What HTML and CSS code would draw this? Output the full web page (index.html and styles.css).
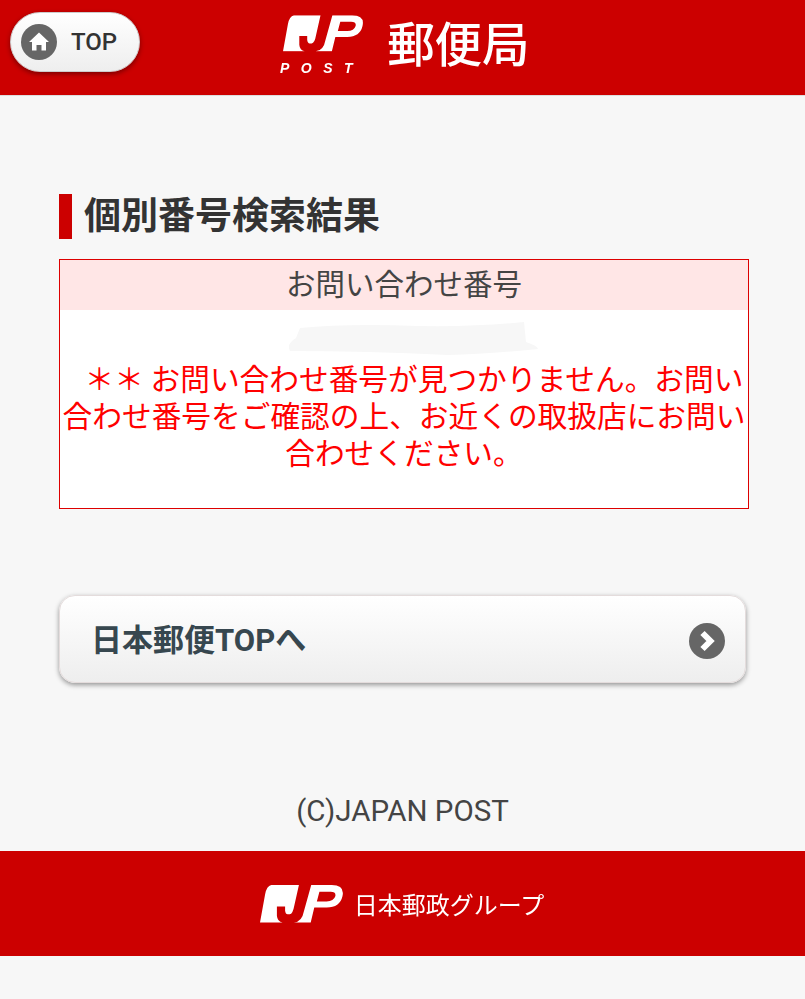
FILE: index.html
```html
<!DOCTYPE html>
<html lang="ja">
<head>
<meta charset="utf-8">
<title>個別番号検索結果</title>
<link rel="stylesheet" href="styles.css">
</head>
<body>
<svg class="defs" width="0" height="0" aria-hidden="true">
  <symbol id="jp-logo" viewBox="0 0 82 37" preserveAspectRatio="none">
    <path fill="#fff" d="M0 36.500 L5 9 Q6.500 1 11 0 L38 0 L33.500 20 Q32 28.500 29 28.500 L27 28.500 Q25 28.500 24.500 25 L24.500 21 L16.500 21 L16.500 30 Q17 36 22 36.500 Z"/>
    <path fill="#fff" fill-rule="evenodd" d="M50 0 L70 0 Q83 0 80.500 11 Q78 22 65 22 L53 22 L49.500 36.500 L33 36.500 Q41 36 43 25 Z M58 6.500 L55.500 16 L65 16 Q72 16 73.500 11 Q74.500 6.500 69 6.500 Z"/>
  </symbol>
</svg>
<header class="site-header">
  <a class="top-btn" href="#">
    <span class="top-icon">
      <svg viewBox="0 0 36 36" width="36" height="36"><circle cx="18" cy="18" r="18" fill="#666"/><path d="M18 8.500 L28 18 L25 18 L25 26.500 L20.500 26.500 L20.500 21 L15.500 21 L15.500 26.500 L11 26.500 L11 18 L8 18 Z" fill="#fff"/></svg>
    </span>
    <span class="top-label">TOP</span>
  </a>
  <div class="brand">
    <div class="brand-mark">
      <svg class="logo-header" viewBox="0 0 82 37" width="81" height="37"><use href="#jp-logo"/></svg>
      <span class="post-label">POST</span>
    </div>
    <span class="brand-name">郵便局</span>
  </div>
</header>

<main class="content">
  <h1 class="page-title">個別番号検索結果</h1>
  <section class="result-box">
    <h2 class="result-head">お問い合わせ番号</h2>
    <div class="result-number"><svg class="smudge" viewBox="0 0 250 36" width="250" height="36"><path d="M12 6 Q60 1 130 4 Q190 5 236 0 L238 20 Q250 24 250 27 Q200 32 160 33 Q80 29 2 29 Q-2 22 8 16 Z" fill="#f7f7f7"/></svg></div>
    <p class="result-msg">&nbsp;&nbsp;&nbsp;＊＊ お問い合わせ番号が見つかりません。お問い合わせ番号をご確認の上、お近くの取扱店にお問い合わせください。</p>
  </section>
  <a class="nav-btn" href="#">
    <span class="nav-label">日本郵便TOPへ</span>
    <svg class="nav-arrow" viewBox="0 0 36 36" width="36" height="36"><circle cx="18" cy="18" r="18" fill="#666"/><path d="M13.500 10 L21.500 18 L13.500 26" fill="none" stroke="#fff" stroke-width="6"/></svg>
  </a>
  <p class="copyright">(C)JAPAN POST</p>
</main>

<footer class="site-footer">
  <svg class="logo-footer" viewBox="0 0 82 37" width="84" height="42"><use href="#jp-logo"/></svg>
  <span class="group-name">日本郵政グループ</span>
</footer>
</body>
</html>
```

FILE: styles.css
```css
* { box-sizing: border-box; }
html, body { margin: 0; padding: 0; }
body {
  background: #f7f7f7;
  font-family: Roboto, "Noto Sans CJK JP", sans-serif;
  color: #333;
  height: 999px;
  overflow: hidden;
}
a { text-decoration: none; color: inherit; }
.defs { position: absolute; }

.site-header {
  height: 96px;
  background: #cc0000;
  border-bottom: 1px solid #ddd;
  display: flex;
  align-items: center;
  padding: 0 0 11px 10px;
}
.top-btn {
  width: 130px;
  height: 60px;
  border-radius: 30px;
  background: linear-gradient(#fff, #eee);
  border: 1px solid #ccc;
  box-shadow: 0 2px 5px rgba(0, 0, 0, .4);
  display: flex;
  align-items: center;
  gap: 14px;
  padding-left: 10px;
}
.top-icon { width: 36px; height: 36px; display: block; line-height: 0; }
.top-label { font-size: 24px; font-weight: 500; color: #333; }
.brand {
  display: flex;
  align-items: center;
  gap: 23px;
  margin-left: 140px;
  filter: blur(.4px);
}
.brand-mark {
  display: flex;
  flex-direction: column;
  align-items: flex-start;
  line-height: 0;
  padding-top: 6px;
}
.logo-header { margin-left: 3px; }
.brand-name {
  font-family: "Noto Sans CJK JP", sans-serif;
  font-size: 47.500px;
  line-height: 58px;
  font-weight: 500;
  color: #fff;
}
.post-label {
  font-family: "Liberation Sans", sans-serif;
  font-size: 14px;
  line-height: 16px;
  margin-top: 8px;
  font-style: italic;
  font-weight: 700;
  letter-spacing: 11.500px;
  color: #fff;
}

.content { padding: 98px 59px 0; height: 755px; }
.page-title {
  margin: 0 0 20px;
  height: 45px;
  border-left: 13px solid #cc0000;
  padding-left: 12px;
  font-family: "Noto Sans CJK JP", sans-serif;
  font-size: 37px;
  line-height: 38px;
  font-weight: 700;
  color: #333;
}
.result-box {
  width: 690px;
  height: 250px;
  border: 1px solid #dd0000;
  background: #fff;
}
.result-head {
  margin: 0;
  height: 50px;
  background: #ffe6e6;
  font-family: "Noto Sans CJK JP", sans-serif;
  font-size: 29.500px;
  line-height: 45px;
  font-weight: 400;
  text-align: center;
  color: #444;
}
.result-number { height: 49px; padding: 12px 0 0 228px; line-height: 0; }
.result-msg {
  margin: 0;
  font-family: "Noto Sans CJK JP", sans-serif;
  font-size: 29.700px;
  line-height: 37px;
  color: #ff0000;
  text-align: center;
}
.nav-btn {
  margin-top: 86px;
  width: 687px;
  height: 88px;
  border-radius: 16px;
  background: linear-gradient(#fff, #eee);
  border: 1px solid #e4dcdc;
  box-shadow: 0 2px 5px rgba(0, 0, 0, .4);
  display: flex;
  align-items: center;
  justify-content: space-between;
  padding: 0 20px 0 31px;
  font-size: 31px;
  line-height: 40px;
  font-weight: 700;
  color: #37474f;
}
.nav-label { padding-top: 3px; }
.nav-arrow { margin-top: 4px; }
.copyright {
  margin: 108px 0 0;
  text-align: center;
  font-size: 29.500px;
  line-height: 40px;
  color: #444;
}
.site-footer {
  height: 105px;
  background: #cc0000;
  display: flex;
  align-items: center;
  justify-content: center;
  gap: 10px;
  padding-right: 1px;
  filter: blur(.4px);
}
.group-name {
  font-family: "Noto Sans CJK JP", sans-serif;
  font-size: 24px;
  line-height: 30px;
  color: #fff;
}
```
